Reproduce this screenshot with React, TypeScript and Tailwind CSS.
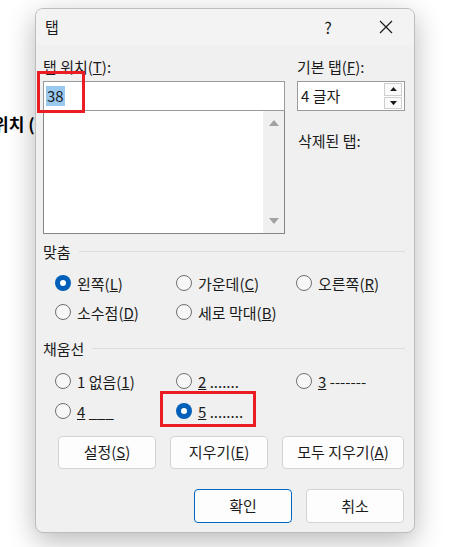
import React from "react";

const FONT = { fontFamily: '"Noto Sans CJK KR", "Noto Sans", sans-serif' };

// radio circle, blue dot when checked
const Radio: React.FC<{ checked?: boolean }> = ({ checked }) =>
  checked ? (
    <span className="w-[16px] h-[16px] rounded-full bg-[#005fb8] flex items-center justify-center shrink-0">
      <span className="w-[6px] h-[6px] rounded-full bg-white" />
    </span>
  ) : (
    <span className="w-[16px] h-[16px] rounded-full border border-[#6f6f6f] bg-[#f7f7f7] shrink-0" />
  );

const RadioItem: React.FC<{ checked?: boolean; children: React.ReactNode }> = ({
  checked,
  children,
}) => (
  <div className="flex items-center h-[24px] gap-[6px]">
    <Radio checked={checked} />
    <span className="leading-none whitespace-nowrap">{children}</span>
  </div>
);

const SectionTitle: React.FC<{ label: string }> = ({ label }) => (
  <div className="flex items-center h-[18px] gap-[8px]">
    <span className="leading-none">{label}</span>
    <div className="flex-1 h-px bg-[#dcdcdc]" />
  </div>
);

const Btn: React.FC<{ w: string; primary?: boolean; children: React.ReactNode }> = ({
  w,
  primary,
  children,
}) => (
  <div
    className={`${w} h-full rounded-[4px] bg-[#fdfdfd] flex items-center justify-center border ${
      primary ? "border-[#0067c0]" : "border-[#d3d3d3]"
    }`}
  >
    {children}
  </div>
);

const Arrow: React.FC<{ up?: boolean; color: string; size: number }> = ({ up, color, size }) => (
  <svg width={size} height={size * 0.6} viewBox="0 0 10 6">
    <path d={up ? "M0 6 L5 0 L10 6 Z" : "M0 0 L5 6 L10 0 Z"} fill={color} />
  </svg>
);

export default function App() {
  return (
    <div
      className="relative w-[449px] h-[547px] overflow-hidden bg-white pl-[35px] pt-[8px] text-[15px] text-[#1b1b1b]"
      style={FONT}
    >
      {/* document text behind dialog */}
      <div className="absolute left-[-7px] top-[111px] text-[17px] font-bold text-black whitespace-nowrap">
        위치 (
      </div>

      {/* Dialog */}
      <div className="relative w-[380px] h-[525px] rounded-[8px] border border-[#bdbdbd] bg-[#f0f0f0] shadow-[0_8px_28px_rgba(0,0,0,0.28)] overflow-hidden flex flex-col">
        {/* Title bar */}
        <div className="h-[36px] bg-[#f3f3f3] flex items-center pl-[9px] shrink-0">
          <span className="text-[15px]">탭</span>
          <span className="ml-auto text-[16px] w-[20px] text-center mr-[41px]">?</span>
          <svg width="14" height="14" viewBox="0 0 14 14" className="mr-[21px]">
            <path d="M1 1 L13 13 M13 1 L1 13" stroke="#1b1b1b" strokeWidth="1.2" />
          </svg>
        </div>

        {/* Body */}
        <div className="flex flex-col pl-[7px] pr-[9px] pt-[12px]">
          <div className="flex gap-[12px]">
            {/* tab position */}
            <div className="w-[242px] flex flex-col">
              <div className="h-[18px] leading-none flex items-center">
                탭 위치(<u>T</u>):
              </div>
              <div className="relative mt-[6px] h-[30px] bg-white border border-[#9a9a9a] flex items-center pl-[2px]">
                <span className="bg-[#99c9ef] px-[1px] text-[15px] leading-[20px]">38</span>
                <div className="absolute left-[-7px] top-[-11px] w-[48px] h-[42px] border-[3px] border-[#ec1c24]" />
              </div>
              <div className="h-[123px] bg-white border border-t-0 border-[#858585] flex">
                <div className="flex-1" />
                <div className="w-[21px] bg-[#f0f0f0] flex flex-col items-center justify-between py-[9px]">
                  <Arrow up color="#a3a3a3" size={10} />
                  <Arrow color="#a3a3a3" size={10} />
                </div>
              </div>
            </div>

            {/* default tab */}
            <div className="flex-1 flex flex-col">
              <div className="h-[18px] leading-none flex items-center">
                기본 탭(<u>F</u>):
              </div>
              <div className="mt-[6px] h-[30px] bg-white border border-[#9a9a9a] flex items-center pl-[3px] pr-[2px]">
                <span className="flex-1">4 글자</span>
                <div className="w-[18px] h-[26px] flex flex-col gap-[1px]">
                  <div className="flex-1 bg-[#fafafa] border border-[#cfcfcf] flex items-center justify-center">
                    <Arrow up color="#1b1b1b" size={7} />
                  </div>
                  <div className="flex-1 bg-[#fafafa] border border-[#cfcfcf] flex items-center justify-center">
                    <Arrow color="#1b1b1b" size={7} />
                  </div>
                </div>
              </div>
              <div className="mt-[20px] h-[18px] leading-none flex items-center pl-[1px]">삭제된 탭:</div>
            </div>
          </div>

          {/* Alignment */}
          <div className="mt-[8px]">
            <SectionTitle label="맞춤" />
          </div>
          <div className="mt-[11px] pl-[12px] grid grid-cols-[121px_120px_1fr] gap-y-[5px]">
            <RadioItem checked>
              왼쪽(<u>L</u>)
            </RadioItem>
            <RadioItem>
              가운데(<u>C</u>)
            </RadioItem>
            <RadioItem>
              오른쪽(<u>R</u>)
            </RadioItem>
            <RadioItem>
              소수점(<u>D</u>)
            </RadioItem>
            <RadioItem>
              세로 막대(<u>B</u>)
            </RadioItem>
          </div>

          {/* Leader */}
          <div className="mt-[15px]">
            <SectionTitle label="채움선" />
          </div>
          <div className="mt-[12px] pl-[12px] grid grid-cols-[121px_120px_1fr] gap-y-[6px]">
            <RadioItem>
              1 없음(<u>1</u>)
            </RadioItem>
            <RadioItem>
              <u>2</u> .......
            </RadioItem>
            <RadioItem>
              <u>3</u> -------
            </RadioItem>
            <RadioItem>
              <u>4</u> ___
            </RadioItem>
            <div className="relative">
              <RadioItem checked>
                <u>5</u> ........
              </RadioItem>
              <div className="absolute left-[-16px] top-[-8px] w-[96px] h-[36px] border-[3px] border-[#ec1c24]" />
            </div>
          </div>

          {/* Set / clear buttons */}
          <div className="mt-[13px] h-[33px] pl-[15px] flex gap-[14px]">
            <Btn w="w-[98px]">
              설정(<u>S</u>)
            </Btn>
            <Btn w="w-[98px]">
              지우기(<u>E</u>)
            </Btn>
            <Btn w="w-[122px]">
              모두 지우기(<u>A</u>)
            </Btn>
          </div>

          {/* OK / Cancel */}
          <div className="mt-[20px] h-[34px] flex justify-end gap-[14px] pr-[1px]">
            <Btn w="w-[98px]" primary>
              확인
            </Btn>
            <Btn w="w-[98px]">취소</Btn>
          </div>
        </div>
      </div>
    </div>
  );
}
